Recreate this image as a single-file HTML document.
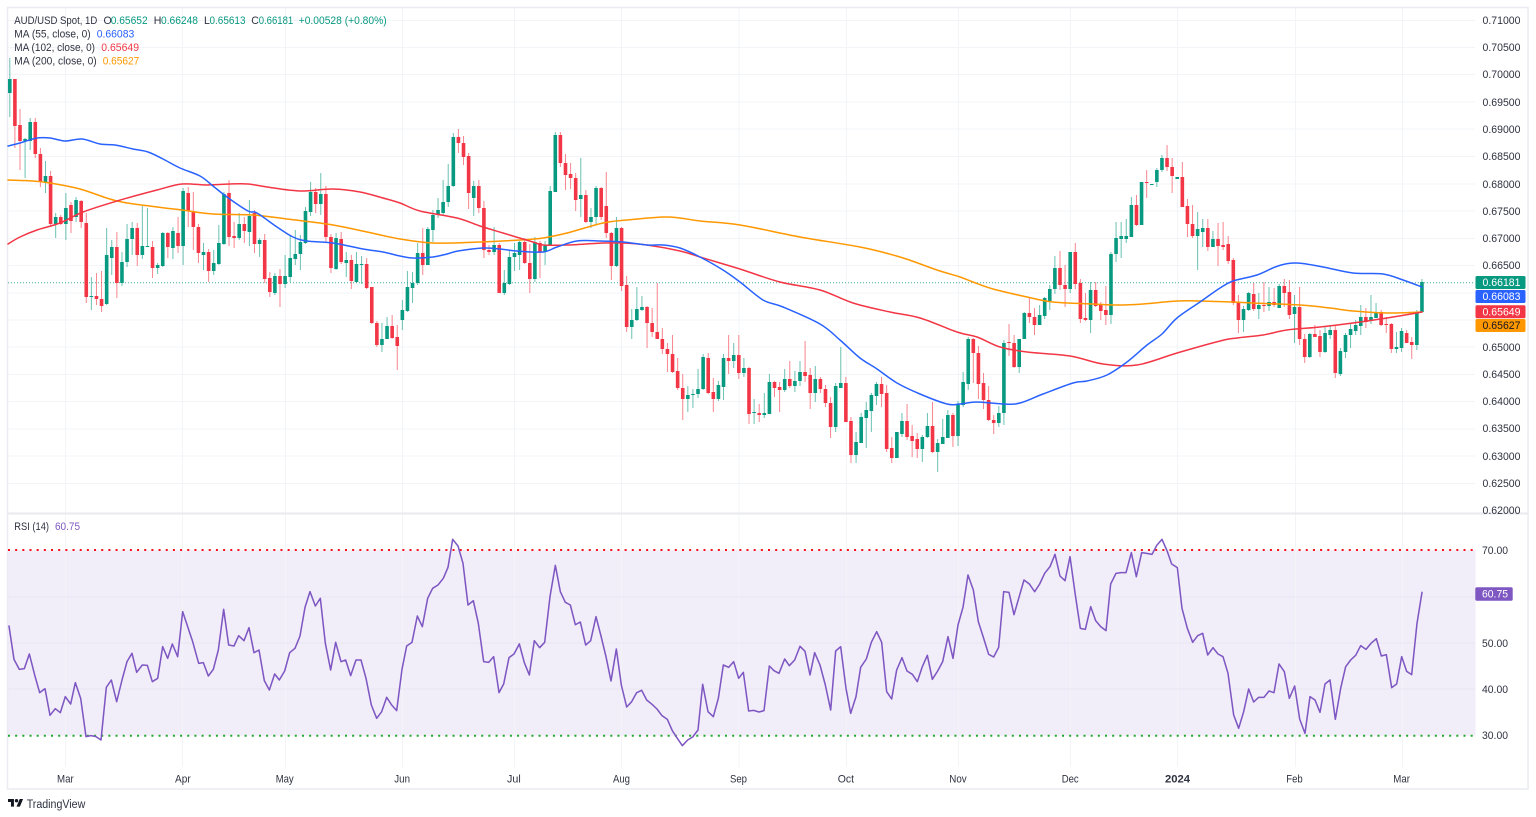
<!DOCTYPE html>
<html lang="en">
<head>
<meta charset="utf-8">
<title>AUD/USD Spot, 1D</title>
<style>
html,body{margin:0;padding:0;background:#fff;width:1536px;height:817px;overflow:hidden}
svg{display:block;filter:blur(.3px)}
text{font-family:"Liberation Sans",Arial,sans-serif;font-size:10.6px;fill:#2e3240;dominant-baseline:central;transform:translateY(.8px)}
.g{fill:#089981}.b{fill:#2962ff}.r{fill:#f23645}.o{fill:#ff9800}.p{fill:#7e57c2}
.w{fill:#fff}.k{fill:#131722}
.ma{fill:none;stroke-width:1.5;stroke-linejoin:round;stroke-linecap:round}
.rsi{fill:none;stroke:#7e57c2;stroke-width:4.6;stroke-linejoin:round;stroke-linecap:round}
</style>
</head>
<body>
<svg id="c" xmlns="http://www.w3.org/2000/svg" width="1536" height="817" viewBox="0 0 1536 817">
<rect width="1536" height="817" fill="#fff"/>
<!-- RSI band -->
<rect x="8" y="550" width="1467.500" height="185.700" fill="#f1edf9"/>
<!-- grid -->
<g stroke="#f3f4f7" stroke-width="1" fill="none">
<path d="M8 20.500H1475M8 47.500H1475M8 74.500H1475M8 102H1475M8 129H1475M8 156.500H1475M8 184H1475M8 211H1475M8 238.500H1475M8 265.500H1475M8 293H1475M8 320H1475M8 347H1475M8 374.500H1475M8 401.500H1475M8 429H1475M8 456H1475M8 483.500H1475"/>
<path d="M65.500 8V767M182.500 8V767M285.500 8V767M402.500 8V767M514.500 8V767M621.500 8V767M739 8V767M846.500 8V767M958.500 8V767M1070.500 8V767M1177.500 8V767M1295.500 8V767M1402.500 8V767"/>
</g>
<path d="M8 597H1475M8 643H1475M8 689H1475" stroke="#e9e6f3" stroke-width="1" fill="none"/>
<!-- frame -->
<rect x="7.500" y="7.500" width="1520.500" height="781.500" fill="none" stroke="#eaecf1" stroke-width="1.500"/>
<path d="M8 513.500H1528" stroke="#e8eaef" stroke-width="2"/>
<!-- last price line -->
<path d="M8 282.700H1475" stroke="#089981" stroke-width="1" stroke-dasharray="1 2" opacity=".8"/>
<g id="candles"></g>
<!-- MA 200 -->
<polyline class="ma" stroke="#ff9800" points="8,180 33,181 50,183 80,189 117,201 157,207 182,210 213,214 253,215 287,219 333,225 367,232 400,239 433,243 480,242 520,240 543,238 567,233 603,223 627,220 663,217 680,218 700,221 740,225 800,237 860,247 900,257 937,270 960,277 973,282 993,289 1027,297 1053,302 1093,304 1117,305 1143,304 1177,301 1200,301 1233,302 1253,303 1300,305 1330,308 1353,311 1387,313 1422,312"/>
<!-- MA 102 -->
<polyline class="ma" stroke="#f23645" points="8,244 20,237 37,230 60,223 83,212 117,201 157,190 182,184 207,185 230,184 248,184 267,187 300,191 333,189 360,192 383,198 400,203 420,211 457,218 480,226 503,233 533,242 543,245 567,245 603,243 623,243 647,245 680,251 700,257 720,263 743,270 780,282 820,290 853,303 890,312 920,318 957,332 977,337 1000,347 1027,352 1070,356 1103,364 1137,365 1177,353 1220,341 1237,338 1263,335 1287,330 1320,327 1353,323 1387,318 1422,312"/>
<!-- MA 55 -->
<polyline class="ma" stroke="#2962ff" points="8,146 20,143 37,138 50,138 65,141 82,139 100,144 115,145 133,149 148,152 163,159 180,168 200,176 213,186 227,197 248,211 257,213 277,227 293,237 307,241 333,243 363,249 383,252 400,256 413,258 433,257 447,254 458,251 483,248 500,249 517,251 543,252 557,247 577,241 600,241 623,242 647,245 663,245 680,248 700,257 723,270 740,282 763,300 783,307 820,324 840,340 860,358 877,369 897,383 920,394 947,404 960,404 977,402 1003,404 1020,403 1043,394 1073,383 1087,381 1107,375 1127,362 1147,345 1162,334 1177,318 1200,302 1220,288 1233,281 1257,275 1278,266 1297,263 1323,267 1353,273 1383,274 1403,280 1422,287"/>
<!-- RSI levels -->
<path d="M8 550H1475" stroke="#f5101c" stroke-width="2" stroke-dasharray="2 5.170"/>
<path d="M8 735.700H1475" stroke="#1fa82a" stroke-width="2" stroke-dasharray="2 5.170"/>
<!-- RSI line -->
<g transform="translate(0,510) scale(.33333)">
<polyline class="rsi" points="27,348 42,448 58,478 73,476 88,432 104,495 119,548 135,536 150,616 166,596 181,608 196,560 212,582 226,518 242,565 258,680 273,677 288,680 303,690 319,532 334,510 350,575 366,510 381,455 396,430 410,487 427,465 442,466 457,515 473,505 488,410 503,445 517,402 533,440 548,305 563,350 578,395 596,460 610,458 625,498 640,478 655,420 671,298 686,405 702,408 716,377 732,392 747,353 762,428 777,420 793,512 808,540 824,492 838,510 854,483 869,428 885,415 900,378 915,292 930,245 946,288 961,265 976,400 992,480 1007,397 1023,455 1037,450 1052,497 1068,450 1083,450 1098,505 1114,585 1130,625 1145,605 1160,562 1175,585 1190,602 1206,478 1220,408 1236,397 1252,318 1267,350 1283,265 1298,235 1314,225 1330,205 1344,172 1358,88 1374,108 1389,160 1404,285 1420,272 1435,340 1451,455 1466,457 1481,440 1497,548 1511,522 1527,443 1542,432 1558,402"/>
</g>
<g transform="translate(510,510) scale(.33333)">
<polyline class="rsi" points="28,402 43,458 58,495 73,392 89,413 104,397 120,260 136,166 151,245 166,277 181,285 196,344 211,336 227,405 242,392 258,320 273,378 288,440 303,513 319,417 334,525 350,591 365,575 380,548 395,541 410,570 426,583 441,597 456,617 472,628 487,662 502,685 517,707 533,690 548,681 564,660 578,523 594,605 610,620 625,565 640,465 656,472 671,455 686,505 700,487 716,603 731,601 747,606 762,602 778,468 792,482 807,490 824,447 838,467 854,450 870,409 885,424 900,495 914,428 930,465 946,525 962,600 977,423 992,410 1008,535 1022,610 1038,560 1052,472 1069,447 1084,397 1100,365 1115,397 1130,545 1145,567 1160,480 1176,443 1191,483 1207,493 1222,515 1237,470 1252,436 1267,508 1283,483 1298,455 1314,380 1329,445 1344,345 1359,292 1374,195 1390,240 1405,335 1421,385 1436,433 1451,441 1466,412 1481,245 1497,247 1512,314 1527,262 1542,210 1558,222"/>
</g>
<g transform="translate(1016,510) scale(.33333)">
<polyline class="rsi" points="40,222 56,245 71,222 86,190 102,170 117,133 132,198 147,212 162,140 178,255 193,355 208,358 224,290 239,332 254,350 270,362 284,222 300,190 315,188 330,188 346,128 361,200 377,128 392,130 408,133 423,105 438,88 453,122 467,162 484,173 498,295 514,355 530,397 545,377 560,370 575,435 591,413 606,432 621,440 636,490 653,615 668,655 683,605 698,537 713,576 728,562 744,562 759,543 774,548 789,462 805,485 820,565 836,528 851,627 867,670 882,560 897,570 912,607 927,522 942,510 958,628 974,535 989,470 1004,450 1019,436 1034,407 1050,418 1065,400 1081,386 1096,438 1111,434 1127,533 1142,522 1157,440 1172,484 1187,494 1203,340 1218,247"/>
</g>
<!-- legend -->
<text x="14.300" y="20" textLength="83" lengthAdjust="spacingAndGlyphs">AUD/USD Spot, 1D</text>
<text x="103.500" y="20" textLength="7">O</text>
<text class="g" x="110.700" y="20" textLength="37" lengthAdjust="spacingAndGlyphs">0.65652</text>
<text x="153.700" y="20" textLength="7">H</text>
<text class="g" x="161" y="20" textLength="37" lengthAdjust="spacingAndGlyphs">0.66248</text>
<text x="204" y="20" textLength="5">L</text>
<text class="g" x="209.500" y="20" textLength="36" lengthAdjust="spacingAndGlyphs">0.65613</text>
<text x="251.300" y="20" textLength="7">C</text>
<text class="g" x="258.700" y="20" textLength="34.500" lengthAdjust="spacingAndGlyphs">0.66181</text>
<text class="g" x="298.700" y="20" textLength="88" lengthAdjust="spacingAndGlyphs">+0.00528 (+0.80%)</text>
<text x="14.300" y="33.700" textLength="76.400" lengthAdjust="spacingAndGlyphs">MA (55, close, 0)</text>
<text class="b" x="96.700" y="33.700" textLength="37.600" lengthAdjust="spacingAndGlyphs">0.66083</text>
<text x="14.300" y="47" textLength="80.700" lengthAdjust="spacingAndGlyphs">MA (102, close, 0)</text>
<text class="r" x="101.300" y="47" textLength="37.700" lengthAdjust="spacingAndGlyphs">0.65649</text>
<text x="14.300" y="60.500" textLength="82.400" lengthAdjust="spacingAndGlyphs">MA (200, close, 0)</text>
<text class="o" x="102.700" y="60.500" textLength="36.600" lengthAdjust="spacingAndGlyphs">0.65627</text>
<text x="14.300" y="526.300" textLength="34.700" lengthAdjust="spacingAndGlyphs">RSI (14)</text>
<text class="p" x="55" y="526.300" textLength="25" lengthAdjust="spacingAndGlyphs">60.75</text>
<!-- price axis -->
<g>
<text x="1482.500" y="20" textLength="38" lengthAdjust="spacingAndGlyphs">0.71000</text>
<text x="1482.500" y="47" textLength="38" lengthAdjust="spacingAndGlyphs">0.70500</text>
<text x="1482.500" y="74" textLength="38" lengthAdjust="spacingAndGlyphs">0.70000</text>
<text x="1482.500" y="102" textLength="38" lengthAdjust="spacingAndGlyphs">0.69500</text>
<text x="1482.500" y="129" textLength="38" lengthAdjust="spacingAndGlyphs">0.69000</text>
<text x="1482.500" y="156" textLength="38" lengthAdjust="spacingAndGlyphs">0.68500</text>
<text x="1482.500" y="184" textLength="38" lengthAdjust="spacingAndGlyphs">0.68000</text>
<text x="1482.500" y="211" textLength="38" lengthAdjust="spacingAndGlyphs">0.67500</text>
<text x="1482.500" y="238" textLength="38" lengthAdjust="spacingAndGlyphs">0.67000</text>
<text x="1482.500" y="265" textLength="38" lengthAdjust="spacingAndGlyphs">0.66500</text>
<text x="1482.500" y="347" textLength="38" lengthAdjust="spacingAndGlyphs">0.65000</text>
<text x="1482.500" y="374" textLength="38" lengthAdjust="spacingAndGlyphs">0.64500</text>
<text x="1482.500" y="401" textLength="38" lengthAdjust="spacingAndGlyphs">0.64000</text>
<text x="1482.500" y="428" textLength="38" lengthAdjust="spacingAndGlyphs">0.63500</text>
<text x="1482.500" y="456" textLength="38" lengthAdjust="spacingAndGlyphs">0.63000</text>
<text x="1482.500" y="483" textLength="38" lengthAdjust="spacingAndGlyphs">0.62500</text>
<text x="1482.500" y="510" textLength="38" lengthAdjust="spacingAndGlyphs">0.62000</text>
</g>
<!-- price tags -->
<rect x="1475.500" y="276" width="50" height="13" rx="1.500" fill="#089981"/>
<rect x="1475.500" y="290" width="50" height="13" rx="1.500" fill="#2962ff"/>
<rect x="1475.500" y="305.300" width="50" height="13" rx="1.500" fill="#f23645"/>
<rect x="1475.500" y="319" width="50" height="13" rx="1.500" fill="#ff9800"/>
<text class="w" x="1482.500" y="282.200" textLength="38" lengthAdjust="spacingAndGlyphs">0.66181</text>
<text class="w" x="1482.500" y="296" textLength="38" lengthAdjust="spacingAndGlyphs">0.66083</text>
<text class="w" x="1482.500" y="311.500" textLength="38" lengthAdjust="spacingAndGlyphs">0.65649</text>
<text class="k" x="1482.500" y="325" textLength="38" lengthAdjust="spacingAndGlyphs">0.65627</text>
<!-- RSI axis -->
<text x="1482" y="550" textLength="26" lengthAdjust="spacingAndGlyphs">70.00</text>
<text x="1482" y="643" textLength="26" lengthAdjust="spacingAndGlyphs">50.00</text>
<text x="1482" y="689" textLength="26" lengthAdjust="spacingAndGlyphs">40.00</text>
<text x="1482" y="735" textLength="26" lengthAdjust="spacingAndGlyphs">30.00</text>
<rect x="1475.300" y="587.300" width="37.400" height="13.400" rx="1.500" fill="#7e57c2"/>
<text class="w" x="1482" y="593.500" textLength="26" lengthAdjust="spacingAndGlyphs">60.75</text>
<!-- time axis -->
<g>
<text x="57" y="778.500" textLength="16.700" lengthAdjust="spacingAndGlyphs">Mar</text>
<text x="175" y="778.500" textLength="15.700" lengthAdjust="spacingAndGlyphs">Apr</text>
<text x="275.700" y="778.500" textLength="18" lengthAdjust="spacingAndGlyphs">May</text>
<text x="394.300" y="778.500" textLength="15.700" lengthAdjust="spacingAndGlyphs">Jun</text>
<text x="507" y="778.500" textLength="13.700" lengthAdjust="spacingAndGlyphs">Jul</text>
<text x="613" y="778.500" textLength="17" lengthAdjust="spacingAndGlyphs">Aug</text>
<text x="730" y="778.500" textLength="17" lengthAdjust="spacingAndGlyphs">Sep</text>
<text x="837.700" y="778.500" textLength="16.300" lengthAdjust="spacingAndGlyphs">Oct</text>
<text x="949.300" y="778.500" textLength="17.400" lengthAdjust="spacingAndGlyphs">Nov</text>
<text x="1061.700" y="778.500" textLength="17" lengthAdjust="spacingAndGlyphs">Dec</text>
<text x="1165" y="778.500" textLength="25" lengthAdjust="spacingAndGlyphs" font-weight="700">2024</text>
<text x="1286.300" y="778.500" textLength="16.400" lengthAdjust="spacingAndGlyphs">Feb</text>
<text x="1393.300" y="778.500" textLength="16.700" lengthAdjust="spacingAndGlyphs">Mar</text>
</g>
<!-- logo -->
<g transform="translate(8,797.300) scale(.425)" fill="#131722">
<path d="M14 22H7V11H0V4h14v18zM28 22h-8l7.500-18h8L28 22z"/>
<circle cx="20" cy="8" r="4"/>
</g>
<text x="26.700" y="804" textLength="58.600" lengthAdjust="spacingAndGlyphs" style="font-size:11.500px">TradingView</text>
</svg>
<script>
(function(){
var D="g 58 79 93 117,r 79 79 126 148,r 109 125 141 170,g 138 139 141 178,g 118 122 141 150,r 118 122 154 158,r 148 154 182 187,g 161 176 182 193,r 171 176 224 227,g 213 217 224 238,r 215 217 224 225,g 193 208 224 240,r 202 205 221 233,g 197 200 217 222,r 200 201 222 228,r 213 223 297 303,g 277 296 297 310,r 273 296 299 305,r 271 299 306 312,g 228 255 304 305,g 240 247 258 275,r 232 247 283 298,g 252 262 283 286,g 224 239 262 267,g 222 228 239 255,r 223 228 255 266,g 206 246 255 259,g 208 246 247 247,r 241 247 268 278,g 263 265 268 274,g 232 233 266 267,r 232 233 247 258,g 227 231 248 259,r 217 233 246 253,g 188 191 246 265,r 187 193 211 227,r 192 211 227 250,r 224 227 253 263,g 243 252 255 270,r 249 252 271 282,g 250 263 271 275,g 225 243 264 265,g 192 194 244 245,r 180 193 237 246,r 222 236 238 248,g 213 224 238 240,r 217 224 231 243,g 200 216 232 246,r 210 213 244 253,g 238 240 244 257,r 234 240 279 283,r 272 278 292 297,g 273 276 293 295,r 269 276 284 307,g 255 276 284 288,g 235 258 277 282,g 230 254 259 265,g 235 242 254 270,g 207 211 243 244,g 182 192 212 216,r 188 192 204 213,g 173 194 204 215,r 186 194 237 243,r 234 237 268 273,g 233 238 269 270,r 232 239 262 264,g 252 260 263 277,r 255 260 281 289,g 252 264 282 283,g 256 264 265 284,r 258 264 288 289,r 287 287 323 324,r 321 323 345 347,g 323 339 345 352,g 317 326 339 339,r 315 326 338 339,r 325 337 346 370,g 300 310 320 330,g 271 287 311 312,g 272 283 288 303,g 243 253 283 285,r 228 253 265 275,g 227 229 265 265,g 210 215 230 242,g 198 210 215 218,g 180 202 213 216,g 164 186 202 207,g 133 137 186 187,r 129 137 143 153,r 136 143 157 165,r 153 156 193 209,g 181 186 198 216,r 180 186 208 213,r 201 208 250 258,r 245 250 252 255,g 227 245 252 255,r 243 245 293 293,g 270 283 293 295,g 251 257 284 285,g 243 253 257 271,g 241 242 255 270,r 238 242 263 264,r 244 263 279 293,g 237 242 279 282,r 241 243 252 278,g 241 245 252 265,g 186 191 246 246,g 132 135 192 192,r 132 135 163 167,r 154 163 175 190,r 163 174 178 189,r 173 178 200 211,g 158 195 199 217,r 190 195 222 223,g 208 217 222 228,g 186 188 217 225,r 187 188 217 220,r 172 206 233 238,r 232 233 266 280,g 217 228 266 267,r 227 228 286 291,r 276 285 327 332,g 309 320 327 339,g 287 309 320 321,g 296 307 310 311,r 306 307 323 348,r 308 323 332 337,r 283 332 339 339,r 328 339 349 354,r 343 349 354 372,r 335 354 372 373,r 358 371 388 390,r 374 388 399 420,g 386 395 399 412,g 389 394 395 408,g 369 389 394 398,g 354 357 389 390,r 353 358 393 394,r 378 392 399 412,g 381 385 399 401,g 354 358 387 400,r 335 358 361 374,g 343 355 361 368,r 335 355 373 379,g 358 368 373 377,r 367 368 414 424,g 399 412 413 424,r 404 413 415 422,g 393 413 415 418,g 374 382 414 414,r 381 382 388 397,r 382 387 390 412,g 369 379 390 392,r 361 379 386 388,g 371 381 386 392,g 361 372 381 386,r 341 372 376 382,r 368 375 393 409,g 366 379 393 402,r 377 379 389 393,r 385 389 403 407,r 397 403 427 438,g 383 386 427 432,g 347 383 388 388,r 377 383 422 422,r 417 421 455 463,g 432 442 455 463,g 413 417 443 443,g 402 410 418 448,g 393 395 411 432,g 382 384 396 405,r 377 384 394 407,r 385 393 449 452,r 437 448 458 463,g 432 432 458 458,g 413 421 434 437,r 404 421 437 440,r 425 436 441 457,r 433 439 449 458,g 435 437 449 462,g 413 426 437 438,r 402 426 452 453,g 439 443 452 472,g 419 437 444 444,g 410 415 438 438,r 413 415 436 447,g 401 404 436 446,g 372 382 405 407,g 337 339 384 390,r 338 339 353 383,r 346 353 384 399,r 373 383 400 409,r 386 400 420 421,r 415 420 423 434,g 406 413 423 427,g 340 343 413 425,r 324 342 343 356,r 335 343 367 368,g 339 339 367 373,g 312 313 339 339,r 298 313 317 323,r 308 317 325 335,g 305 315 325 325,g 297 298 316 319,g 285 289 301 310,g 256 268 289 294,r 251 268 285 290,r 265 285 289 307,g 252 252 289 293,r 243 252 284 289,r 279 283 319 323,r 293 318 320 321,g 282 290 320 333,r 282 290 306 307,r 302 304 311 320,r 286 310 315 325,g 252 254 315 324,g 222 238 254 262,g 222 236 239 258,g 219 236 239 243,g 197 205 237 237,r 195 205 225 226,g 182 182 225 225,r 170 182 183 198,g 184 184 185 185,g 168 170 182 187,g 155 158 170 172,r 145 158 167 171,r 158 167 176 193,g 177 177 179 179,r 162 177 207 207,r 199 206 224 237,r 205 224 236 238,g 212 229 236 270,g 219 228 232 247,r 219 228 247 251,g 231 239 247 247,r 223 239 246 266,r 222 245 247 250,r 236 244 261 264,r 258 260 303 305,r 295 302 320 333,g 306 309 320 332,g 292 293 310 311,r 283 294 309 311,g 293 305 309 319,r 282 305 306 312,g 287 302 306 311,r 288 302 305 307,g 284 286 308 308,r 279 286 293 307,r 280 292 315 319,g 295 307 314 343,r 287 307 339 345,r 334 339 357 363,g 333 334 357 358,r 325 334 337 337,r 330 336 352 357,g 327 333 352 353,g 325 330 335 339,r 326 330 373 378,g 348 351 374 376,g 333 335 352 358,g 323 329 335 348,g 320 325 331 335,g 305 317 326 335,r 308 317 322 328,g 295 317 321 324,g 303 312 318 318,r 310 312 325 326,r 317 324 325 333,r 323 324 349 353,g 332 347 349 353,g 328 331 348 352,r 330 333 343 343,r 337 342 345 359,g 310 312 345 350,g 279 282 312 313";
var g=document.getElementById("candles"),a=D.split(","),s=5.098,h="";
for(var i=0;i<a.length;i++){
var p=a[i].split(" "),x=9.8+s*i,col=p[0]=="g"?"#089981":"#f23645";
var H=+p[1],T=+p[2],B=+p[3],L=+p[4];
if(B-T<1)B=T+1;
h+='<rect x="'+(x-.5).toFixed(2)+'" y="'+H+'" width="1" height="'+Math.max(L-H,1)+'" fill="'+col+'" opacity=".6"/>';
h+='<rect x="'+(x-1.8).toFixed(2)+'" y="'+T+'" width="3.6" height="'+(B-T)+'" fill="'+col+'"/>';
}
g.innerHTML=h;
/* smooth the moving-average lines */
var ls=document.querySelectorAll("polyline.ma");
for(var j=0;j<ls.length;j++){
var pts=ls[j].getAttribute("points").trim().split(" ").map(function(q){return q.split(",").map(Number)});
var d="M"+pts[0][0]+" "+pts[0][1];
for(var k=0;k<pts.length-1;k++){
var p0=pts[k-1]||pts[k],p1=pts[k],p2=pts[k+1],p3=pts[k+2]||p2;
d+="C"+(p1[0]+(p2[0]-p0[0])/6).toFixed(1)+" "+(p1[1]+(p2[1]-p0[1])/6).toFixed(1)+" "+(p2[0]-(p3[0]-p1[0])/6).toFixed(1)+" "+(p2[1]-(p3[1]-p1[1])/6).toFixed(1)+" "+p2[0]+" "+p2[1];
}
var n=document.createElementNS("http://www.w3.org/2000/svg","path");
n.setAttribute("d",d);n.setAttribute("class","ma");n.setAttribute("stroke",ls[j].getAttribute("stroke"));
ls[j].parentNode.replaceChild(n,ls[j]);
}
})();
</script>
</body>
</html>
